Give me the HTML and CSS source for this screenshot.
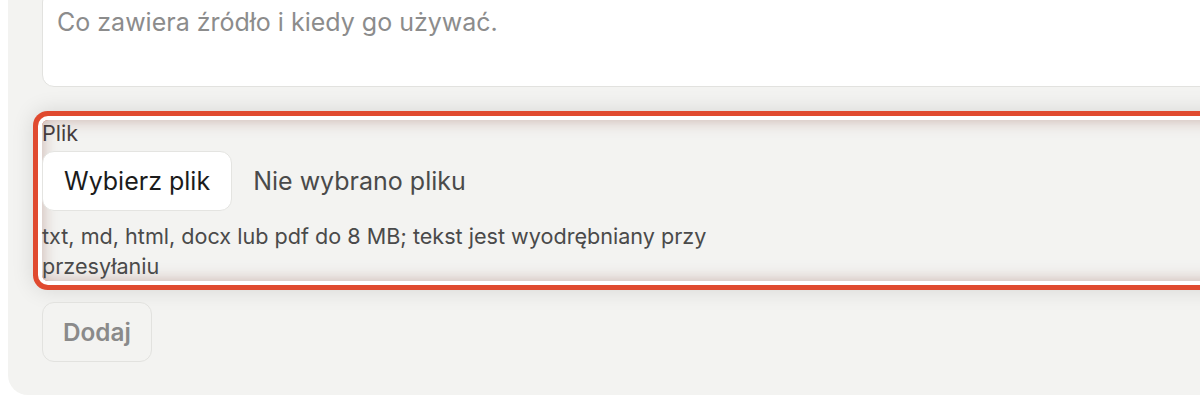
FILE: index.html
```html
<!DOCTYPE html>
<html lang="pl">
<head>
<meta charset="utf-8">
<link rel="stylesheet" href="styles.css">
</head>
<body>
<div class="card">
  <textarea class="desc" placeholder="Co zawiera źródło i kiedy go używać."></textarea>
  <div class="field">
    <label class="label">Plik</label>
    <div class="file">
      <span class="file-btn">Wybierz plik</span>
      <span class="file-name">Nie wybrano pliku</span>
    </div>
    <p class="hint">txt, md, html, docx lub pdf do 8 MB; tekst jest wyodrębniany przy przesyłaniu</p>
  </div>
  <button class="submit" disabled>Dodaj</button>
</div>
</body>
</html>
```

FILE: styles.css
```css
html, body {
  margin: 0;
  padding: 0;
  background: #ffffff;
  overflow: hidden;
  font-family: Inter, "Noto Sans", sans-serif;
}

.card {
  box-sizing: border-box;
  width: 1400px;
  margin: -44px 0 0 8px;
  padding: 34px 34px 33px 34px;
  background: #f3f3f1;
  border-radius: 20px;
  display: flex;
  flex-direction: column;
  align-items: flex-start;
}

.desc {
  box-sizing: border-box;
  display: block;
  width: 1300px;
  height: 97px;
  margin: 0;
  padding: 15px 14px 11px 14px;
  border: 1px solid #e2e2df;
  border-radius: 12px;
  background: #ffffff;
  font-family: Inter, sans-serif;
  font-size: 25px;
  line-height: 32px;
  color: #222;
  resize: none;
  outline: none;
}

.desc::placeholder {
  color: #8c8c8c;
}

.field {
  box-sizing: border-box;
  width: 1300px;
  margin-top: 33px;
  padding: 1px 0 0 0;
  display: flex;
  flex-direction: column;
  align-items: flex-start;
  box-shadow:
    inset 0 0 16px rgba(140, 80, 70, 0.42),
    0 0 0 4px #ffffff,
    0 0 0 9px #e04a2f,
    0 0 22px 9px rgba(0, 0, 0, 0.12);
  border-radius: 6px;
}

.label {
  font-size: 21.6px;
  line-height: 24px;
  color: #453d3e;
}

.file {
  display: flex;
  align-items: center;
  gap: 21px;
  margin-top: 6px;
}

.file-btn {
  box-sizing: border-box;
  height: 60px;
  padding: 0 21px;
  display: flex;
  align-items: center;
  background: #ffffff;
  border: 1px solid #e4e4e1;
  border-radius: 12px;
  font-size: 25px;
  color: #1b1b1b;
}

.file-name {
  font-size: 25px;
  color: #4a4a4a;
}

.hint {
  margin: 10px 0 0 0;
  max-width: 720px;
  font-size: 21.6px;
  line-height: 30px;
  color: #4a4a4a;
}

.submit {
  box-sizing: border-box;
  height: 60px;
  margin-top: 21px;
  padding: 0 20px;
  background: #f3f3f1;
  border: 1px solid #e2e2df;
  border-radius: 12px;
  font-family: Inter, sans-serif;
  font-size: 24.3px;
  font-weight: 600;
  color: #8a8a8a;
}
```
